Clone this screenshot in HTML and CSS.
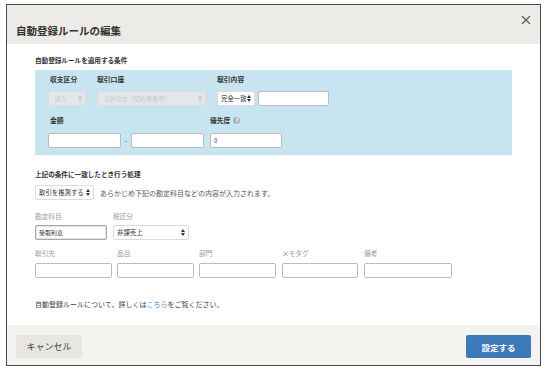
FILE: index.html
```html
<!DOCTYPE html>
<html lang="ja">
<head>
<meta charset="utf-8">
<title>自動登録ルールの編集</title>
<link rel="stylesheet" href="styles.css">
</head>
<body>
<div class="dialog">
  <div class="header">
    <h1 class="title">自動登録ルールの編集</h1>
    <svg class="close" width="10" height="10" viewBox="0 0 10 10"><path d="M1 1L9 9M9 1L1 9" stroke="#555" stroke-width="1.1" fill="none"/></svg>
  </div>
  <div class="body">
    <div class="section-label">自動登録ルールを適用する条件</div>
    <div class="cond-box">
      <div class="cond-row">
        <div class="col c1">
          <div class="blabel indent">収支区分</div>
          <div class="field select disabled w38">収入<svg class="arrow" width="4" height="7" viewBox="0 0 4 7"><path d="M0 3L2 0L4 3ZM0 4L2 7L4 4Z" fill="#c4c8cc"/></svg></div>
        </div>
        <div class="col c2">
          <div class="blabel">取引口座</div>
          <div class="field select disabled w109">三井住友（契約者番号）<svg class="arrow" width="4" height="7" viewBox="0 0 4 7"><path d="M0 3L2 0L4 3ZM0 4L2 7L4 4Z" fill="#c4c8cc"/></svg></div>
        </div>
        <div class="col c3">
          <div class="blabel">取引内容</div>
          <div class="inline">
            <div class="field select plain w38">完全一致<svg class="arrow" width="4" height="7" viewBox="0 0 4 7"><path d="M0 3L2 0L4 3ZM0 4L2 7L4 4Z" fill="#333"/></svg></div>
            <div class="field input w71"></div>
          </div>
        </div>
      </div>
      <div class="cond-row row2">
        <div class="col ca">
          <div class="blabel indent">金額</div>
          <div class="inline">
            <div class="field input w73"></div>
            <span class="dash">-</span>
            <div class="field input w73"></div>
          </div>
        </div>
        <div class="col cb">
          <div class="blabel">優先度<span class="help">?</span></div>
          <div class="field input w72 val">0</div>
        </div>
      </div>
    </div>

    <div class="section-label sec2">上記の条件に一致したとき行う処理</div>
    <div class="inline action-row">
      <div class="field select plain w59 act">取引を推測する<svg class="arrow" width="4" height="7" viewBox="0 0 4 7"><path d="M0 3L2 0L4 3ZM0 4L2 7L4 4Z" fill="#333"/></svg></div>
      <span class="hint">あらかじめ下記の勘定科目などの内容が入力されます。</span>
    </div>

    <div class="grid-row r1">
      <div class="col">
        <div class="glabel">勘定科目</div>
        <div class="field input strong w72 val">受取利息</div>
      </div>
      <div class="col">
        <div class="glabel">税区分</div>
        <div class="field select plain w76 val">非課売上<svg class="arrow" width="4" height="7" viewBox="0 0 4 7"><path d="M0 3L2 0L4 3ZM0 4L2 7L4 4Z" fill="#333"/></svg></div>
      </div>
    </div>

    <div class="grid-row r2">
      <div class="col"><div class="glabel">取引先</div><div class="field input w77"></div></div>
      <div class="col"><div class="glabel">品目</div><div class="field input w77"></div></div>
      <div class="col"><div class="glabel">部門</div><div class="field input w77"></div></div>
      <div class="col"><div class="glabel">メモタグ</div><div class="field input w76"></div></div>
      <div class="col"><div class="glabel">備考</div><div class="field input w88"></div></div>
    </div>

    <p class="note">自動登録ルールについて、詳しくは<a class="link" href="#">こちら</a>をご覧ください。</p>
  </div>
  <div class="footer">
    <button class="btn cancel">キャンセル</button>
    <button class="btn primary">設定する</button>
  </div>
</div>
</body>
</html>
```

FILE: styles.css
```css
* { box-sizing: border-box; }
html, body { margin: 0; padding: 0; background: #fff; }
body {
  font-family: "Noto Sans CJK JP", "Noto Sans", sans-serif;
  color: #333;
}
.dialog {
  margin: 4px 0 0 6px;
  width: 535px;
  height: 362px;
  border: 1px solid #4a4a4a;
  display: flex;
  flex-direction: column;
  background: #fff;
}
.header {
  position: relative;
  height: 39px;
  background: #edebe7;
  padding: 18px 0 0 9px;
}
.title {
  margin: 0;
  font-size: 10.5px;
  line-height: 16px;
  font-weight: 700;
  color: #333;
}
.close {
  position: absolute;
  right: 9px;
  top: 10px;
}
.body {
  flex: 1;
  padding: 0 0 0 28px;
}
.section-label {
  font-size: 6.6px;
  font-weight: 700;
  line-height: 10px;
  margin-top: 11px;
  color: #333;
}
.cond-box {
  margin-top: 5px;
  width: 477px;
  height: 85px;
  background: #c8e4f0;
  padding: 5px 0 0 13px;
}
.cond-row { display: flex; }
.row2 { margin-top: 10px; }
.col { display: flex; flex-direction: column; }
.c1 { width: 49px; }
.c2 { width: 120px; }
.ca { width: 162px; }
.blabel {
  font-size: 6.8px;
  font-weight: 700;
  line-height: 9px;
  height: 9px;
  margin-bottom: 7px;
  color: #333;
  display: flex;
  align-items: center;
}
.row2 .blabel { margin-bottom: 8px; }
.indent { padding-left: 2px; }
.help {
  display: inline-block;
  width: 7px;
  height: 7px;
  border-radius: 50%;
  background: #a9b3b8;
  color: #fff;
  font-size: 5px;
  line-height: 7px;
  text-align: center;
  margin-left: 3px;
  font-family: "DejaVu Sans", sans-serif;
  font-weight: 700;
}
.inline { display: flex; align-items: center; }
.field {
  height: 15px;
  border: 1px solid #c4c4c4;
  border-radius: 2px;
  background: #fff;
  font-size: 6px;
  line-height: 13px;
  padding: 0 3px;
  color: #333;
  white-space: nowrap;
  overflow: hidden;
}
.select {
  display: flex;
  align-items: center;
  justify-content: space-between;
}
.select .arrow { flex: none; }
.disabled {
  background: #e3e7ea;
  border-color: #d8dde0;
  color: #c2c7cb;
  padding-left: 6px;
}
.plain { border-color: #dcdcdc; font-size: 6.4px; }
.w38 { width: 38px; }
.w59 { width: 59px; }
.w71 { width: 71px; margin-left: 3px; }
.w72 { width: 72px; }
.w73 { width: 73px; }
.w76 { width: 76px; }
.w77 { width: 77px; }
.w88 { width: 88px; }
.w109 { width: 109px; }
.input { border-color: #bcbcbc; }
.val { padding-left: 3px; }
.dash { width: 10px; text-align: center; font-size: 8px; line-height: 13px; color: #666; }
.sec2 { margin-top: 14px; }
.action-row { margin-top: 6px; }
.act { padding-left: 3px; }
.hint { font-size: 7px; color: #555; margin-left: 6px; }
.grid-row { display: flex; gap: 5px; }
.r1 { margin-top: 11px; gap: 6px; }
.r2 { margin-top: 8px; }
.r2 .col:nth-child(4) { margin-left: 1px; }
.r2 .col:nth-child(5) { margin-left: 1px; }
.glabel {
  font-size: 6.7px;
  line-height: 10px;
  color: #999;
  margin-bottom: 4px;
}
.r2 .glabel { margin-bottom: 5px; }
.strong { border: 1px solid #a8a8a8; box-shadow: inset 0 0 0 0.5px #c8c8c8; }
.note {
  margin: 21px 0 0;
  font-size: 7px;
  line-height: 10px;
  color: #444;
}
.link { color: #4a8fd6; text-decoration: none; }
.footer {
  height: 40px;
  background: #f5f3f0;
  display: flex;
  justify-content: space-between;
  align-items: flex-start;
  padding: 10px 9px 0 9px;
}
.btn {
  height: 23px;
  border: none;
  border-radius: 2px;
  font-family: "Noto Sans CJK JP", "Noto Sans", sans-serif;
  padding: 0;
}
.cancel {
  width: 66px;
  background: #e8e6e2;
  color: #444;
  font-size: 9px;
}
.primary {
  width: 65px;
  background: #3d7ab9;
  color: #fff;
  font-size: 8.5px;
  font-weight: 700;
}
```
